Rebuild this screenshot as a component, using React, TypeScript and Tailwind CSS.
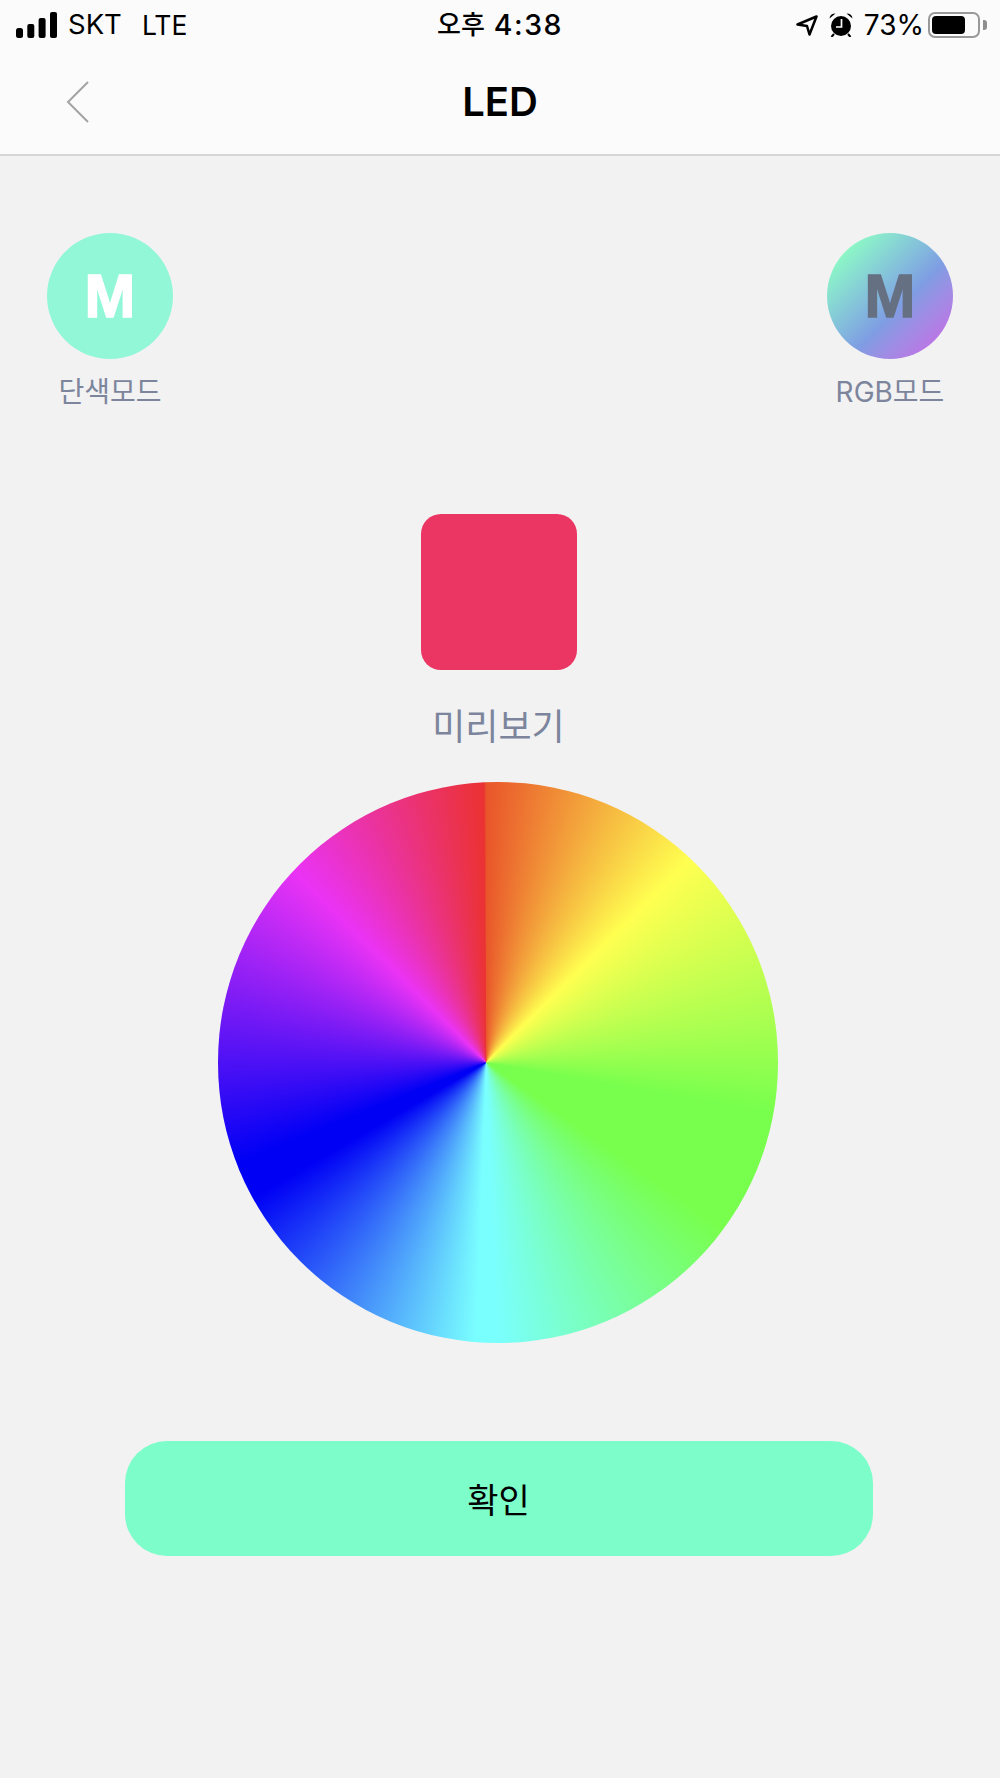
import React from 'react';

const labelFont = "font-['Inter','Noto_Sans_CJK_KR',sans-serif]";

const SignalBars = () => (
  <svg width="41" height="26" viewBox="0 0 41 26" className="block">
    <rect x="0" y="16" width="7" height="10" rx="2.5" fill="#000" />
    <rect x="11.3" y="12" width="7" height="14" rx="2" fill="#000" />
    <rect x="22.6" y="6" width="7" height="20" rx="2" fill="#000" />
    <rect x="34" y="0" width="7" height="26" rx="2" fill="#000" />
  </svg>
);

const LocationArrow = () => (
  <svg width="22" height="21" viewBox="0 0 22 21" className="block">
    <path d="M20.5 1.5 L1.5 9.5 L11 11 L13.5 19.5 Z" fill="none" stroke="#000" strokeWidth="2.5" strokeLinejoin="round" />
  </svg>
);

const AlarmClock = () => (
  <svg width="24" height="24" viewBox="0 0 24 24" className="block">
    <circle cx="12" cy="13" r="10" fill="#000" />
    <path d="M0.5 5.5 Q1 0.5 6.5 0.5 Z M23.5 5.5 Q23 0.5 17.5 0.5 Z" fill="#000" />
    <path d="M5 21 L2.5 24 M19 21 L21.5 24" stroke="#000" strokeWidth="2" />
    <path d="M12.5 6 V14 H7" fill="none" stroke="#fff" strokeWidth="1.7" />
  </svg>
);

const Battery = () => (
  <div className="flex items-center">
    <div className="w-[52px] h-[26px] rounded-[7px] border-2 border-[#999999] p-[2px]">
      <div className="w-[33px] h-full rounded-[4px] bg-black" />
    </div>
    <div className="ml-[3px] w-[4px] h-[10px] rounded-r-[3px] bg-[#8e8e8e]" />
  </div>
);

const StatusBar = () => (
  <div className="relative h-[50px] flex items-center justify-between pl-4 pr-[13px] text-black">
    <div className="flex items-center">
      <SignalBars />
      <span className="ml-[11px] text-[27.5px] leading-none font-['Inter',sans-serif]">SKT</span>
      <span className="ml-[20px] text-[26.5px] leading-none font-['Inter',sans-serif]">LTE</span>
    </div>
    <div className="absolute left-[437px] top-[8px] flex items-center leading-[34px] font-medium font-['Inter','Noto_Sans_CJK_KR',sans-serif]">
      <span className="text-[26px]">오후</span>
      <span className="ml-[9px] text-[28.5px] tracking-[1.5px]">4:38</span>
    </div>
    <div className="flex items-center">
      <LocationArrow />
      <div className="ml-[11px]"><AlarmClock /></div>
      <span className="ml-[11px] mr-[4px] text-[28px] leading-none font-['Inter',sans-serif]">73%</span>
      <Battery />
    </div>
  </div>
);

const NavBar = () => (
  <div className="relative h-[106px] flex items-center justify-center border-b-2 border-[#d6d6d6]">
    <button className="absolute left-[66px] top-[30px]">
      <svg width="24" height="44" viewBox="0 0 24 44" className="block">
        <path d="M22 2 L2 22 L22 42" fill="none" stroke="#a3a3a3" strokeWidth="2" />
      </svg>
    </button>
    <h1 className="text-[40px] font-semibold text-black font-['Inter',sans-serif]">LED</h1>
  </div>
);

const ModeButton = ({ label, circle, letter }: { label: string; circle: string; letter: string }) => (
  <div className="w-[126px] flex flex-col items-center">
    <div className={`w-[126px] h-[126px] rounded-full flex items-center justify-center ${circle}`}>
      <span className={`text-[61px] leading-none font-bold font-['Liberation_Sans',sans-serif] ${letter}`}>M</span>
    </div>
    <span className={`mt-[15px] text-[28px] leading-[36px] whitespace-nowrap text-[#7c859c] ${labelFont}`}>{label}</span>
  </div>
);

export default function App() {
  return (
    <div className="w-[1000px] h-[1778px] bg-[#f2f2f3] flex flex-col overflow-hidden">
      <div className="bg-[#fbfbfc]">
        <StatusBar />
        <NavBar />
      </div>

      <div className="flex justify-between px-[47px] pt-[77px]">
        <ModeButton
          label="단색모드"
          circle="bg-[#92f7d7]"
          letter="text-white [-webkit-text-stroke:1.5px_#ffffff]"
        />
        <ModeButton
          label="RGB모드"
          circle="bg-gradient-to-br from-[#8cf6c6] from-[15%] via-[#7f9de3] via-[58%] to-[#c867e6] to-[95%]"
          letter="text-[#667083] [-webkit-text-stroke:1.5px_#667083]"
        />
      </div>

      <div className="mt-[104px] pr-[3px] flex flex-col items-center">
        <div className="w-[156px] h-[156px] rounded-[20px] bg-[#eb3563]" />
        <span className={`mt-[33px] text-[36px] leading-[48px] text-[#7c859c] ${labelFont}`}>미리보기</span>
        <div className="mt-[31px] mr-[1px] w-[560px] h-[561px] rounded-full bg-[conic-gradient(from_0deg_at_47.9%_50%,#e9552a_0deg,#ffff50_45deg,#a8ff50_82deg,#78ff4d_100deg,#78ff4d_125deg,#7affff_178deg,#7affff_182deg,#0000f5_240deg,#0000f5_248deg,#ea33f5_315deg,#eb3232_359.5deg,#e9552a_360deg)]" />
      </div>

      <div className="mt-[98px] pr-[3px] flex justify-center">
        <button className="w-[748px] h-[115px] rounded-[42px] bg-[#7dfdc9] text-[34px] text-black font-['Noto_Sans_CJK_KR',sans-serif]">
          확인
        </button>
      </div>
    </div>
  );
}
